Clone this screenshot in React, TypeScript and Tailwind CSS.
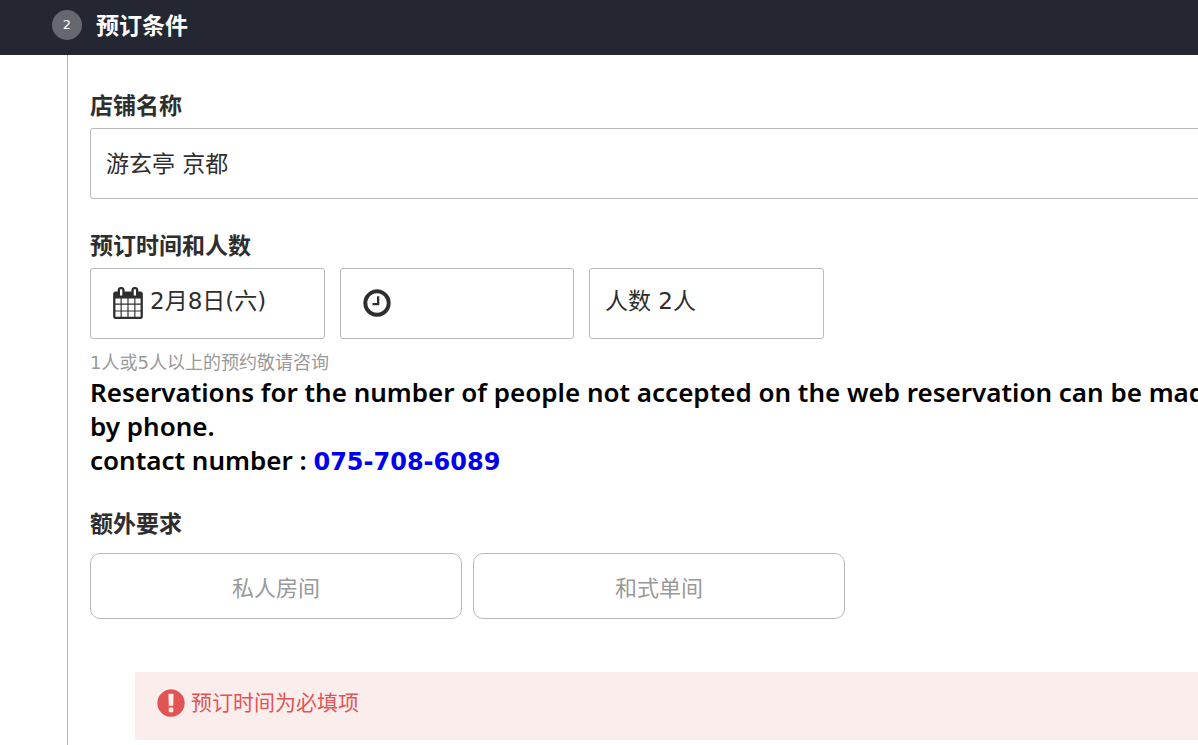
import type { ReactNode } from "react";

const labelClass = "block text-[23px] leading-[34px] font-bold text-[#2e2e2e]";
const boxClass = "flex h-[71px] rounded-[3px] border border-[#b8b9bb] bg-white text-[23px] text-[#2e2e2e]";
const selectClass = "min-w-0 flex-1 appearance-none bg-transparent outline-none";

function Icon({ d, className = "" }: { d: string; className?: string }) {
  return (
    <svg viewBox="0 0 1792 1792" className={`size-8 shrink-0 fill-current ${className}`} aria-hidden="true">
      <path d={d} />
    </svg>
  );
}

const calendarPath =
  "M192 1664h288v-288h-288v288zM544 1664h320v-288h-320v288zM192 1312h288v-320h-288v320zM544 1312h320v-320h-320v320zM192 928h288v-288h-288v288zM928 1664h320v-288h-320v288zM544 928h320v-288h-320v288zM1312 1664h288v-288h-288v288zM928 1312h320v-320h-320v320zM576 448v-288q0-13-9.5-22.5t-22.5-9.5h-64q-13 0-22.5 9.5t-9.5 22.5v288q0 13 9.5 22.5t22.5 9.5h64q13 0 22.5-9.5t9.5-22.5zM1312 1312h288v-320h-288v320zM928 928h320v-288h-320v288zM1312 928h288v-288h-288v288zM1344 448v-288q0-13-9.5-22.5t-22.5-9.5h-64q-13 0-22.5 9.5t-9.5 22.5v288q0 13 9.5 22.5t22.5 9.5h64q13 0 22.5-9.5t9.5-22.5zM1728 384v1280q0 52-38 90t-90 38h-1408q-52 0-90-38t-38-90v-1280q0-52 38-90t90-38h128v-96q0-66 47-113t113-47h64q66 0 113 47t47 113v96h384v-96q0-66 47-113t113-47h64q66 0 113 47t47 113v96h128q52 0 90 38t38 90z";
const clockPath =
  "M1024 544v448q0 14-9 23t-23 9h-320q-14 0-23-9t-9-23v-64q0-14 9-23t23-9h224v-352q0-14 9-23t23-9h64q14 0 23 9t9 23zm416 352q0-148-73-273t-198-198-273-73-273 73-198 198-73 273 73 273 198 198 273 73 273-73 198-198 73-273zm224 0q0 209-103 385.5t-279.5 279.5-385.5 103-385.5-103-279.5-279.5-103-385.5 103-385.5 279.5-279.5 385.5-103 385.5 103 279.5 279.5 103 385.5z";
const alertPath =
  "M896 128q209 0 385.5 103t279.5 279.5 103 385.5-103 385.5-279.5 279.5-385.5 103-385.5-103-279.5-279.5-103-385.5 103-385.5 279.5-279.5 385.5-103zm128 1247v-190q0-14-9-23.5t-22-9.5h-192q-13 0-23 10t-10 23v190q0 13 10 23t23 10h192q13 0 22-9.5t9-23.5zm-2-344l18-621q0-12-10-18-10-8-24-8h-220q-14 0-24 8-10 6-10 18l17 621q0 10 10 17.5t24 7.5h185q14 0 23.5-7.5t10.5-17.5z";

function OptionButton({ children }: { children: ReactNode }) {
  return (
    <button type="button" className="h-[66px] w-[372px] rounded-[10px] border border-[#b8b9bb] pt-1 text-[22px] text-[#999999]">
      {children}
    </button>
  );
}

export default function App() {
  return (
    <div className="min-h-screen overflow-x-hidden bg-white font-['DejaVu_Sans','Noto_Sans_CJK_SC',sans-serif] text-[#2e2e2e]" lang="zh-CN">
      <header className="flex h-[55px] items-start bg-[#242631] pt-2.5 pl-[52px] text-white">
        <span className="flex size-[30px] items-center justify-center rounded-full bg-[#666871] text-[13px]">2</span>
        <h1 className="ml-3.5 text-[23px] leading-8 font-bold">预订条件</h1>
      </header>

      <main className="ml-[67px] min-h-[690px] border-l border-[#b8b9bb] pl-[22px]">
        <form className="min-w-[1150px] pt-[34px]">
          <label htmlFor="shop" className={labelClass}>店铺名称</label>
          <div className={`${boxClass} mt-[5px] pl-[15px]`}>
            <select id="shop" className={`${selectClass} pt-0.5`}>
              <option>游玄亭 京都</option>
            </select>
          </div>

          <fieldset className="mt-[30px]">
            <legend className={labelClass}>预订时间和人数</legend>
            <div className="mt-[5px] flex gap-[15px]">
              <div className={`${boxClass} w-[235px] items-center pl-[21px]`}>
                <Icon d={calendarPath} className="mb-0.5" />
                <select aria-label="日期" className={`${selectClass} ml-1.5 h-full pb-1`}>
                  <option>2月8日(六)</option>
                </select>
              </div>
              <div className={`${boxClass} w-[234px] items-center pl-5`}>
                <Icon d={clockPath} className="mb-0.5" />
                <select aria-label="时间" className={`${selectClass} ml-1.5 h-full`}>
                  <option></option>
                </select>
              </div>
              <div className={`${boxClass} w-[235px] pl-[15px]`}>
                <select aria-label="人数" className={`${selectClass} pb-1`}>
                  <option>人数 2人</option>
                </select>
              </div>
            </div>
          </fieldset>

          <p className="mt-3 text-lg leading-6 text-[#999999]">1人或5人以上的预约敬请咨询</p>
          <p className="font-['Noto_Sans',sans-serif] text-[26px] leading-[34px] font-semibold text-black">
            Reservations for the number of people not accepted on the web reservation can be made by phone.
            <br />
            contact number :{" "}
            <a href="tel:075-708-6089" className="font-['DejaVu_Sans',sans-serif] text-2xl leading-none font-bold text-[#0000ee]">
              075-708-6089
            </a>
          </p>

          <fieldset className="mt-[30px]">
            <legend className={labelClass}>额外要求</legend>
            <div className="mt-3 flex gap-[11px]">
              <OptionButton>私人房间</OptionButton>
              <OptionButton>和式单间</OptionButton>
            </div>
          </fieldset>

          <div role="alert" className="mt-[53px] ml-[45px] flex h-[68px] items-center gap-1 bg-[#fceded] pb-1.5 pl-5 text-[21px] text-[#e25454]">
            <Icon d={alertPath} />
            <span className="pt-0.5">预订时间为必填项</span>
          </div>
        </form>
      </main>
    </div>
  );
}
